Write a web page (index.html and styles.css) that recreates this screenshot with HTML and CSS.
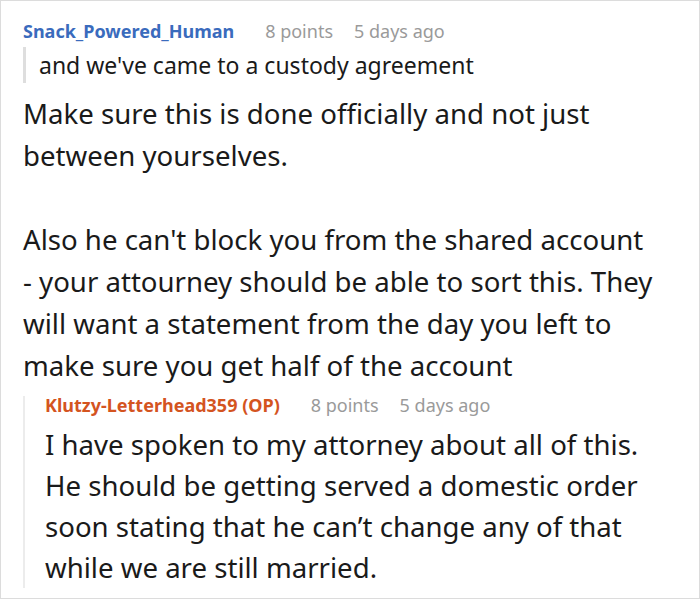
FILE: index.html
```html
<!DOCTYPE html>
<html>
<head>
<meta charset="utf-8">
<link rel="stylesheet" href="styles.css">
</head>
<body>
<div class="frame">
  <div class="comment">
    <div class="meta">
      <span class="user user-blue">Snack_Powered_Human</span>
      <span class="stat">8 points</span>
      <span class="stat">5 days ago</span>
    </div>
    <blockquote class="quote">and we've came to a custody agreement</blockquote>
    <div class="body main-body">
      <p>Make sure this is done officially and not just between yourselves.</p>
      <p>Also he can't block you from the shared account - your attourney should be able to sort this. They will want a statement from the day you left to make sure you get half of the account</p>
    </div>
    <div class="reply">
      <div class="meta">
        <span class="user user-orange">Klutzy-Letterhead359 (OP)</span>
        <span class="stat">8 points</span>
        <span class="stat">5 days ago</span>
      </div>
      <div class="body reply-body">
        <p>I have spoken to my attorney about all of this. He should be getting served a domestic order soon stating that he can’t change any of that while we are still married.</p>
      </div>
    </div>
  </div>
</div>
</body>
</html>
```

FILE: styles.css
```css
html, body {
  margin: 0;
  padding: 0;
  background: #fff;
}
.frame {
  width: 700px;
  height: 599px;
  box-sizing: border-box;
  border: 1px solid #dcdcdc;
  overflow: hidden;
  font-family: "Noto Sans", "Open Sans", sans-serif;
  color: #1a1a1a;
}
.comment {
  padding: 17px 44px 0 22px;
}
.meta {
  display: flex;
  align-items: baseline;
  font-size: 18px;
  line-height: 26px;
  white-space: nowrap;
}
.user {
  font-weight: 700;
  margin-right: 31px;
}
.user-blue { color: #3a6bbd; }
.user-orange { color: #d4541f; }
.stat {
  color: #9a9a9a;
  margin-right: 21px;
}
.quote {
  margin: 3px 0 0 0;
  border-left: 3px solid #dedede;
  padding: 0 0 0 13px;
  font-size: 23px;
  line-height: 36px;
}
.body {
  font-size: 27.6px;
}
.body p {
  margin: 0;
}
.main-body {
  margin-top: 9px;
  line-height: 42px;
}
.main-body p + p {
  margin-top: 42px;
}
.reply {
  margin-top: 10px;
  border-left: 2px solid #ececec;
  padding-left: 20px;
}
.reply .meta {
  line-height: 18px;
}
.reply-body {
  margin-top: 10px;
  line-height: 41px;
}
```
